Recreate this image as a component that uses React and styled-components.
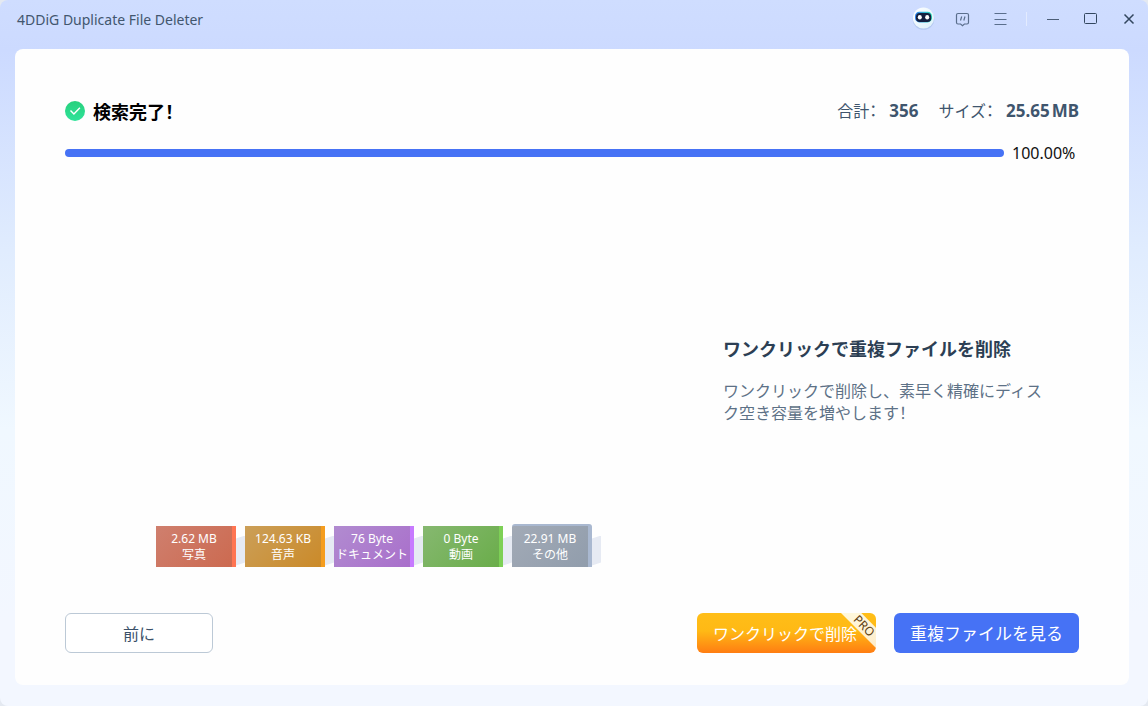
import React from "react";
import styled, { createGlobalStyle } from "styled-components";

const CATEGORIES = [
  { size: "2.62 MB", label: "写真", from: "#cf7f6e", to: "#cc6a50", edge: "#ff7552" },
  { size: "124.63 KB", label: "音声", from: "#cb9f58", to: "#cb8a29", edge: "#f59d1e" },
  { size: "76 Byte", label: "ドキュメント", from: "#b18bd0", to: "#a96fcb", edge: "#c77aff" },
  { size: "0 Byte", label: "動画", from: "#86b870", to: "#6aad4a", edge: "#7dd056" },
  { size: "22.91 MB", label: "その他", from: "#a2aab6", to: "#919dac", edge: "#a9b8d0", cap: true },
];

const BotIcon = () => (
  <svg width="24" height="26" viewBox="0 0 24 26" aria-hidden="true">
    <defs>
      <linearGradient id="botFace" x1="0" y1="0" x2="1" y2="1">
        <stop offset="0" stopColor="#ffffff" />
        <stop offset="1" stopColor="#dcf0fa" />
      </linearGradient>
      <linearGradient id="botRim" x1="0" y1="0" x2="1" y2="0">
        <stop offset="0" stopColor="#2f7dea" />
        <stop offset="1" stopColor="#2fe0b8" />
      </linearGradient>
    </defs>
    <circle cx="11.5" cy="13" r="10.8" fill="#a9c0ea" opacity="0.7" />
    <circle cx="11.5" cy="12" r="10.6" fill="url(#botFace)" />
    <rect x="3" y="5.8" width="17" height="10.6" rx="4.4" fill="url(#botRim)" />
    <rect x="4" y="6.9" width="15.2" height="9.1" rx="3.8" fill="#15203f" />
    <ellipse cx="7.8" cy="11.3" rx="2" ry="2.3" fill="#fff" />
    <ellipse cx="15.2" cy="11.3" rx="2" ry="2.3" fill="#fff" />
  </svg>
);

const FeedbackIcon = () => (
  <svg width="16" height="16" viewBox="0 0 16 16" fill="none" stroke="#5a6e8c" strokeWidth="1.2" aria-hidden="true">
    <path d="M4 2.5h9c1 0 1.5.5 1.5 1.5v7.5c0 1-.5 1.5-1.5 1.5h-2.6l-1.9 1.6L6.600 13H4c-1 0-1.500-.5-1.500-1.500V4c0-1 .5-1.500 1.500-1.500Z" />
    <path d="M7.700 5.500l-1.200 4M11 5.500l-1.200 4" />
  </svg>
);

const MenuIcon = () => (
  <svg width="16" height="16" viewBox="0 0 16 16" fill="none" stroke="#5a6e8c" aria-hidden="true">
    <path d="M2.500 2.500h12M2.500 8.500h12M2.500 13.500h12" />
  </svg>
);

const MinimizeIcon = () => (
  <svg width="16" height="16" viewBox="0 0 16 16" stroke="#4c5e77" aria-hidden="true">
    <path d="M2 8.500h12" />
  </svg>
);

const MaximizeIcon = () => (
  <svg width="16" height="16" viewBox="0 0 16 16" fill="none" stroke="#33475f" aria-hidden="true">
    <rect x="1.500" y="2.500" width="12" height="10" rx="1" />
  </svg>
);

const CloseIcon = () => (
  <svg width="16" height="16" viewBox="0 0 16 16" stroke="#33475f" strokeWidth="1.5" aria-hidden="true">
    <path d="m3.500 3.500 9 9M12.500 3.500l-9 9" />
  </svg>
);

const DoneIcon = () => (
  <svg width="20" height="20" viewBox="0 0 20 20" aria-hidden="true">
    <defs>
      <linearGradient id="doneFill" x1="0" y1="0" x2="0" y2="1">
        <stop offset="0" stopColor="#27d07c" />
        <stop offset="1" stopColor="#2fe39a" />
      </linearGradient>
    </defs>
    <circle cx="10" cy="10" r="10" fill="url(#doneFill)" />
    <path d="m5.500 9.500 3.400 3.600 6-6.400" fill="none" stroke="#fff" strokeWidth="1.4" />
  </svg>
);

const App = () => {
  return (
    <>
      <GlobalStyle />
      <Window>
        <TitleBar>
          <AppName>4DDiG Duplicate File Deleter</AppName>
          <Controls>
            <IconButton aria-label="アシスタント">
              <BotIcon />
            </IconButton>
            <IconButton aria-label="フィードバック">
              <FeedbackIcon />
            </IconButton>
            <IconButton aria-label="メニュー">
              <MenuIcon />
            </IconButton>
            <Divider />
            <IconButton aria-label="最小化">
              <MinimizeIcon />
            </IconButton>
            <IconButton aria-label="最大化">
              <MaximizeIcon />
            </IconButton>
            <IconButton aria-label="閉じる">
              <CloseIcon />
            </IconButton>
          </Controls>
        </TitleBar>

        <Card>
          <Header>
            <Status>
              <DoneIcon />
              <StatusText>
                検索完了<Half>！</Half>
              </StatusText>
            </Status>
            <Totals>
              <Total>
                <dt>
                  合計<Half>：</Half>
                </dt>
                <dd>356</dd>
              </Total>
              <Total>
                <dt>
                  サイズ<Half>：</Half>
                </dt>
                <dd>
                  25.65<Unit>MB</Unit>
                </dd>
              </Total>
            </Totals>
          </Header>
          <ProgressRow>
            <Progress value={100} max={100} aria-label="検索の進行状況" />
            <Percent>100.00%</Percent>
          </ProgressRow>

          <Body>
            <Chart>
              <Tiles>
                {CATEGORIES.map((item) => (
                  <TileCell key={item.label}>
                    <Tile $from={item.from} $to={item.to} $edge={item.edge} $cap={item.cap}>
                      <span>{item.size}</span>
                      <span>{item.label}</span>
                    </Tile>
                    <Shade />
                  </TileCell>
                ))}
              </Tiles>
            </Chart>
            <Message>
              <Heading>ワンクリックで重複ファイルを削除</Heading>
              <Description>
                ワンクリックで削除し、素早く精確にディスク空き容量を増やします<Half>！</Half>
              </Description>
            </Message>
          </Body>

          <Footer>
            <BackButton>前に</BackButton>
            <Actions>
              <DeleteButton>
                ワンクリックで削除
                <Ribbon />
                <RibbonText>PRO</RibbonText>
              </DeleteButton>
              <ViewButton>重複ファイルを見る</ViewButton>
            </Actions>
          </Footer>
        </Card>
      </Window>
    </>
  );
};

const GlobalStyle = createGlobalStyle`
  * {
    box-sizing: border-box;
  }
  body {
    margin: 0;
    background: #e4e9f1;
    font-family: "Noto Sans", "Noto Sans CJK JP", sans-serif;
  }
  button {
    font-family: inherit;
    cursor: pointer;
  }
`;

const Window = styled.div`
  display: flex;
  flex-direction: column;
  min-height: 100vh;
  padding: 0 19px 21px 15px;
  border-radius: 8px;
  background: linear-gradient(
    #cfddff 0,
    #ccdaff 50px,
    #e0ecfe 250px,
    #f0f8ff 430px,
    #f3f7ff 620px
  );
`;

const TitleBar = styled.header`
  display: flex;
  align-items: flex-start;
  justify-content: space-between;
  height: 49px;
  margin-right: -12px;
`;

const AppName = styled.h1`
  margin: 0;
  padding-left: 2px;
  color: #42566e;
  font-size: 14px;
  font-weight: 400;
  line-height: 40px;
`;

const Controls = styled.div`
  display: flex;
  align-items: center;
  gap: 14px;
  height: 38px;
`;

const IconButton = styled.button`
  display: flex;
  align-items: center;
  justify-content: center;
  width: 24px;
  height: 26px;
  padding: 0;
  border: 0;
  background: none;
`;

const Divider = styled.span`
  width: 1px;
  height: 14px;
  background: #e3ebff;
`;

const Card = styled.main`
  display: flex;
  flex: 1;
  flex-direction: column;
  padding: 50px 50px 32px;
  border-radius: 8px;
  background: #fefefe;
`;

const Header = styled.div`
  display: flex;
  align-items: center;
  justify-content: space-between;
  height: 24px;
`;

const Status = styled.div`
  display: flex;
  align-items: center;
  gap: 8px;
`;

const StatusText = styled.h2`
  margin: 0;
  color: #000;
  font-size: 18px;
  font-weight: 700;
  line-height: 24px;
`;

const Half = styled.span`
  font-family: "Noto Sans CJK JP", sans-serif;
  font-feature-settings: "halt";
`;

const Totals = styled.dl`
  display: flex;
  gap: 20px;
  margin: 0 0 2px;
  color: #3f556d;
  font-size: 16px;
  line-height: 24px;
`;

const Total = styled.div`
  display: flex;
  align-items: baseline;
  gap: 12px;

  dd {
    margin: 0;
    font-size: 17px;
    font-weight: 700;
  }
`;

const Unit = styled.span`
  margin-left: 2px;
`;

const ProgressRow = styled.div`
  display: flex;
  align-items: center;
  gap: 8px;
  margin-top: 18px;
`;

const Progress = styled.progress`
  flex: 1;
  height: 8px;
  border: 0;
  border-radius: 4px;
  appearance: none;
  overflow: hidden;

  &::-webkit-progress-bar {
    background: #e8eefc;
  }
  &::-webkit-progress-value {
    background: #4672f5;
  }
`;

const Percent = styled.span`
  width: 67px;
  color: #111;
  font-size: 16px;
  line-height: 24px;
`;

const Body = styled.div`
  display: grid;
  flex: 1;
  grid-template-columns: 1fr 356px;
  gap: 40px;
`;

const Chart = styled.section`
  display: flex;
  align-items: flex-end;
  justify-content: center;
  padding-bottom: 46px;
`;

const Tiles = styled.div`
  display: flex;
  margin-right: -9px;
`;

const TileCell = styled.div`
  display: flex;
  align-items: center;
`;

const Tile = styled.div`
  display: flex;
  flex-direction: column;
  justify-content: center;
  width: 80px;
  height: ${(props) => (props.$cap ? "43px" : "41px")};
  margin-top: ${(props) => (props.$cap ? "-2px" : "0")};
  border-top: ${(props) => (props.$cap ? `2px solid ${props.$edge}` : "0")};
  border-right: 4px solid ${(props) => props.$edge};
  border-radius: ${(props) => (props.$cap ? "3px 3px 0 0" : "0")};
  background: linear-gradient(
    135deg,
    ${(props) => props.$from},
    ${(props) => props.$to}
  );
  color: #fff;
  font-size: 12px;
  line-height: 16px;
  text-align: center;
  white-space: nowrap;
`;

const Shade = styled.span`
  width: 9px;
  height: 30px;
  margin-top: 8px;
  background: #e6eaf3;
  clip-path: polygon(0 10%, 100% 0, 100% 90%, 0 100%);
`;

const Message = styled.section`
  align-self: center;
  padding: 0 32px 18px 0;
`;

const Heading = styled.h3`
  margin: 0 0 20px;
  color: #2c3f54;
  font-size: 18px;
  font-weight: 700;
  line-height: 24px;
`;

const Description = styled.p`
  margin: 0;
  color: #5d7186;
  font-size: 16px;
  font-weight: 400;
  line-height: 21px;
`;

const Footer = styled.footer`
  display: flex;
  align-items: center;
  justify-content: space-between;
`;

const Actions = styled.div`
  display: flex;
  gap: 18px;
`;

const Button = styled.button`
  height: 40px;
  padding: 2px 16px 0;
  border: 0;
  border-radius: 6px;
  font-size: 16px;
  line-height: 24px;
  white-space: nowrap;
`;

const BackButton = styled(Button)`
  min-width: 148px;
  border: 1px solid #bcc9d6;
  background: #fff;
  color: #3b5169;
`;

const DeleteButton = styled(Button)`
  position: relative;
  min-width: 179px;
  padding-right: 19px;
  background: linear-gradient(#ffbe18 0, #ffb915 45%, #ff7d12 100%);
  color: #fff;
`;

const ViewButton = styled(Button)`
  min-width: 185px;
  background: #4672f5;
  color: #fff;
  font-size: 17px;
`;

const Ribbon = styled.span`
  position: absolute;
  top: 0;
  right: 0;
  width: 35px;
  height: 35px;
  background: linear-gradient(#fff8dc, #fdeccb);
  clip-path: polygon(0 0, 58% 0, 100% 42%, 100% 100%);
`;

const RibbonText = styled.span`
  position: absolute;
  top: 5px;
  right: -1px;
  width: 26px;
  color: #5f4012;
  font-size: 12px;
  line-height: 16px;
  text-align: center;
  transform: rotate(45deg);
`;

export default App;
